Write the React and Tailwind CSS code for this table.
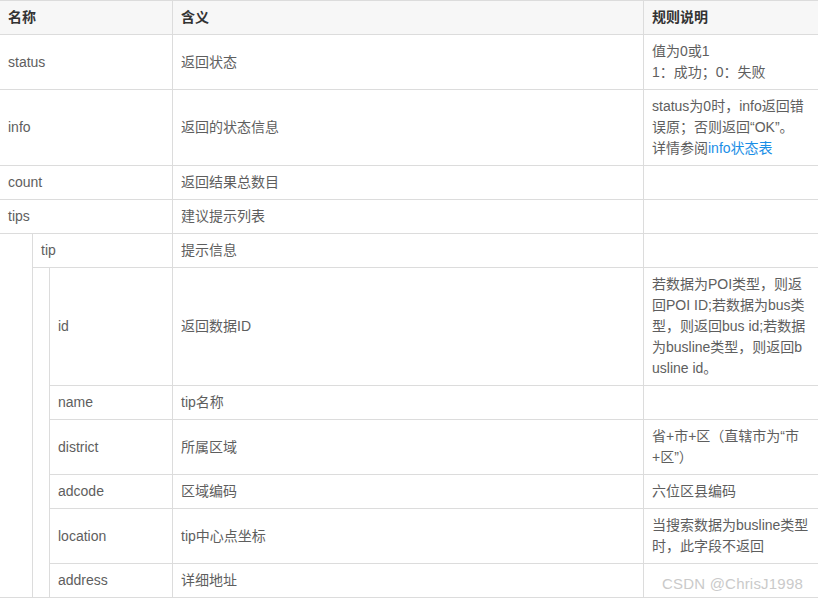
const rows = [
    { depth: 0, name: 'status', meaning: '返回状态', rule: ['值为0或1', '1：成功；0：失败'] },
    {
        depth: 0,
        name: 'info',
        meaning: '返回的状态信息',
        rule: ['status为0时，info返回错', '误原；否则返回“OK”。'],
        link: true
    },
    { depth: 0, name: 'count', meaning: '返回结果总数目', rule: [] },
    { depth: 0, name: 'tips', meaning: '建议提示列表', rule: [] },
    { depth: 1, name: 'tip', meaning: '提示信息', rule: [] },
    {
        depth: 2,
        name: 'id',
        meaning: '返回数据ID',
        rule: ['若数据为POI类型，则返', '回POI ID;若数据为bus类', '型，则返回bus id;若数据', '为busline类型，则返回b', 'usline id。']
    },
    { depth: 2, name: 'name', meaning: 'tip名称', rule: [] },
    { depth: 2, name: 'district', meaning: '所属区域', rule: ['省+市+区（直辖市为“市', '+区”）'] },
    { depth: 2, name: 'adcode', meaning: '区域编码', rule: ['六位区县编码'] },
    { depth: 2, name: 'location', meaning: 'tip中心点坐标', rule: ['当搜索数据为busline类型', '时，此字段不返回'] },
    { depth: 2, name: 'address', meaning: '详细地址', rule: [], last: true }
];

function Row({ row }) {
    const line = row.last ? '' : 'border-b border-[#dcdcdc]';
    return (
        <div className="grid grid-cols-[173px_471px_1fr]">
            <div className="flex border-r border-[#dcdcdc]">
                {row.depth > 0 && <div className="w-[32px] shrink-0" />}
                {row.depth > 1 && <div className="w-[17px] shrink-0 border-l border-[#dcdcdc]" />}
                <div
                    className={`flex flex-1 items-center px-2 py-[6px] ${row.depth > 0 ? 'border-l border-[#dcdcdc]' : ''} ${line}`}
                >
                    {row.name}
                </div>
            </div>
            <div className={`flex items-center px-2 py-[6px] border-r border-[#dcdcdc] ${line}`}>{row.meaning}</div>
            <div className={`px-2 py-[6px] ${line}`}>
                {row.rule.map((t, i) => (
                    <div key={i}>{t}</div>
                ))}
                {row.link && (
                    <div>
                        详情参阅<span className="text-[#1a8ee6]">info状态表</span>
                    </div>
                )}
                {row.rule.length === 0 && !row.link && <div>&nbsp;</div>}
            </div>
        </div>
    );
}

export default function App() {
    return (
        <div
            className="relative w-[818px] h-[600px] overflow-hidden bg-white text-[14px] leading-[21px] text-[#5e5e5e]"
            style={{ fontFamily: '"Liberation Sans", "Noto Sans CJK SC", sans-serif' }}
        >
            <div className="w-[818px] border-b border-[#dcdcdc]">
                <div className="grid grid-cols-[173px_471px_1fr] bg-[#f7f7f7] border-t border-b border-[#dcdcdc] font-bold text-[#333]">
                    <div className="px-2 py-[6px] border-r border-[#dcdcdc]">名称</div>
                    <div className="px-2 py-[6px] border-r border-[#dcdcdc]">含义</div>
                    <div className="px-2 py-[6px]">规则说明</div>
                </div>
                {rows.map((row) => (
                    <Row key={row.name} row={row} />
                ))}
            </div>
            <div className="absolute left-[662px] top-[573px] text-[15px] tracking-[0.2px] text-[#cacaca]">
                CSDN @ChrisJ1998
            </div>
        </div>
    );
}
